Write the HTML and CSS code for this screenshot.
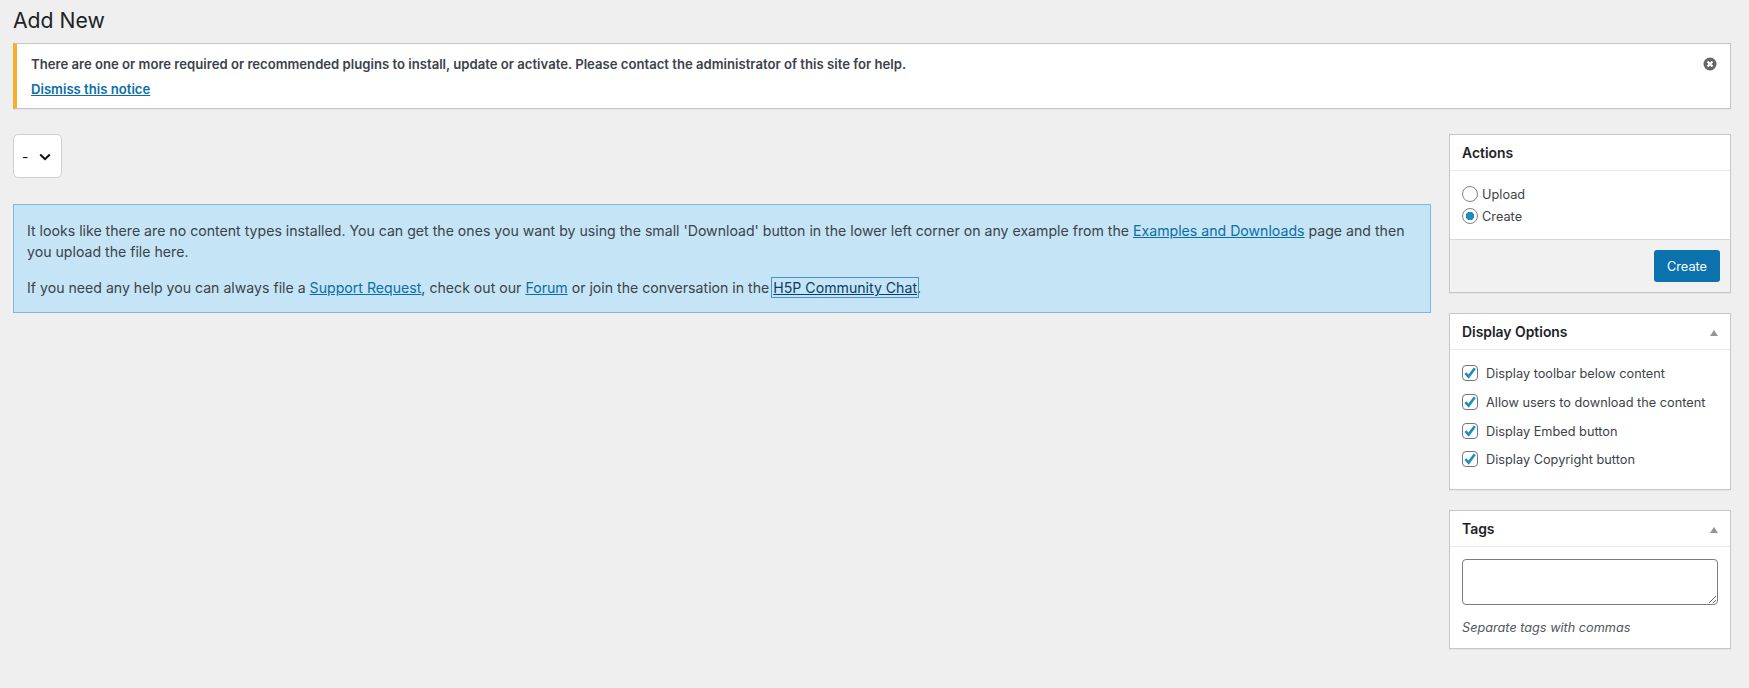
FILE: index.html
```html
<!DOCTYPE html>
<html lang="en">
<head>
<meta charset="utf-8">
<title>Add New</title>
<link rel="stylesheet" href="styles.css">
</head>
<body>
<h1 class="page-title">Add New</h1>
<div class="notice">
  <div class="notice-body">
    <p class="notice-text">There are one or more required or recommended plugins to install, update or activate. Please contact the administrator of this site for help.</p>
    <p class="notice-link"><a href="#">Dismiss this notice</a></p>
  </div>
  <svg class="notice-close" viewBox="0 0 14 14" width="14" height="14"><circle cx="7" cy="7" r="6.5" fill="#63676b"/><path d="M4.5 4.5l5 5M9.5 4.5l-5 5" stroke="#fff" stroke-width="2.2" fill="none"/></svg>
</div>
<div class="columns">
  <main class="main">
    <div class="select-box"><span class="select-value">-</span><svg class="select-chevron" viewBox="0 0 12 8" width="12" height="8"><path d="M1.2 1.5L6 6.2l4.8-4.7" stroke="#111" stroke-width="2" fill="none"/></svg></div>
    <div class="info">
      <p>It looks like there are no content types installed. You can get the ones you want by using the small 'Download' button in the lower left corner on any example from the <a href="#">Examples and Downloads</a> page and then you upload the file here.</p>
      <p>If you need any help you can always file a <a href="#">Support Request</a>, check out our <a href="#">Forum</a> or join the conversation in the <a href="#" class="focused">H5P Community Chat</a>.</p>
    </div>
  </main>
  <aside class="sidebar">
    <section class="box">
      <h2 class="box-title">Actions</h2>
      <div class="actions-body">
        <label class="radio-row"><span class="radio"></span><span class="row-text">Upload</span></label>
        <label class="radio-row"><span class="radio radio-on"></span><span class="row-text">Create</span></label>
      </div>
      <div class="actions-foot"><button class="create-btn" type="button">Create</button></div>
    </section>
    <section class="box">
      <h2 class="box-title">Display Options<span class="caret"></span></h2>
      <div class="options-body">
        <label class="check-row"><svg class="check" viewBox="0 0 16 16" width="16" height="16"><rect x=".5" y=".5" width="15" height="15" rx="3.5" fill="#fff" stroke="#6f7780"/><path d="M3.4 8.2l3.2 3.4 6.2-8.4" stroke="#1e8cbe" stroke-width="2.6" fill="none"/></svg><span class="row-text">Display toolbar below content</span></label>
        <label class="check-row"><svg class="check" viewBox="0 0 16 16" width="16" height="16"><rect x=".5" y=".5" width="15" height="15" rx="3.5" fill="#fff" stroke="#6f7780"/><path d="M3.4 8.2l3.2 3.4 6.2-8.4" stroke="#1e8cbe" stroke-width="2.6" fill="none"/></svg><span class="row-text">Allow users to download the content</span></label>
        <label class="check-row"><svg class="check" viewBox="0 0 16 16" width="16" height="16"><rect x=".5" y=".5" width="15" height="15" rx="3.5" fill="#fff" stroke="#6f7780"/><path d="M3.4 8.2l3.2 3.4 6.2-8.4" stroke="#1e8cbe" stroke-width="2.6" fill="none"/></svg><span class="row-text">Display Embed button</span></label>
        <label class="check-row"><svg class="check" viewBox="0 0 16 16" width="16" height="16"><rect x=".5" y=".5" width="15" height="15" rx="3.5" fill="#fff" stroke="#6f7780"/><path d="M3.4 8.2l3.2 3.4 6.2-8.4" stroke="#1e8cbe" stroke-width="2.6" fill="none"/></svg><span class="row-text">Display Copyright button</span></label>
      </div>
    </section>
    <section class="box">
      <h2 class="box-title">Tags<span class="caret"></span></h2>
      <div class="tags-body">
        <textarea class="tags-input"></textarea>
        <p class="tags-help">Separate tags with commas</p>
      </div>
    </section>
  </aside>
</div>
</body>
</html>
```
FILE: styles.css
```css
* { box-sizing: border-box; }
html, body { margin: 0; }
body {
  height: 688px;
  overflow: hidden;
  padding: 0 18px 0 13px;
  background: #efefef;
  color: #3c434a;
  font-family: Inter, "Liberation Sans", sans-serif;
  font-size: 12.75px;
  line-height: 1.4;
}
a { color: #0a6ea8; text-decoration: underline; }
.page-title {
  height: 43px;
  margin: 0;
  padding-top: 6px;
  font-size: 21.2px;
  line-height: 29px;
  font-weight: 400;
  color: #1d2327;
}
.notice {
  display: flex;
  justify-content: space-between;
  height: 66px;
  padding: 10px 13px 0 14px;
  background: #fff;
  border: 1px solid #c3c4c7;
  border-left: 4px solid #f9ae2b;
  box-shadow: 0 1px 1px rgba(0,0,0,.04);
}
.notice p { margin: 0; }
.notice-text { font-weight: 600; font-size: 13.13px; line-height: 20px; }
.notice-link { margin-top: 5px !important; font-weight: 600; font-size: 13.13px; line-height: 20px; }
.notice-close { flex: none; margin-top: 3px; }
.columns { display: flex; gap: 18px; margin-top: 25px; align-items: flex-start; }
.main { flex: 1; min-width: 0; }
.select-box {
  display: flex;
  align-items: center;
  justify-content: space-between;
  width: 49px;
  height: 44px;
  padding: 2px 10px 0 8px;
  background: #fff;
  border: 1px solid #cfcfcf;
  border-radius: 5px;
  color: #111;
  font-size: 14px;
}
.info {
  margin-top: 26px;
  padding: 15px 13px 10px 13px;
  height: 109px;
  background: #c5e5f6;
  border: 1px solid #7ab9e3;
  font-size: 14.13px;
  line-height: 21px;
}
.info p { margin: 0 0 15px; }
.focused { outline: 1.5px solid #4a8fd0; outline-offset: 1px; color: #08406a; }
.sidebar { flex: none; width: 282px; display: flex; flex-direction: column; gap: 20px; }
.box {
  background: #fff;
  border: 1px solid #c3c8cc;
  box-shadow: 0 1px 1px rgba(0,0,0,.04);
}
.box-title {
  display: flex;
  align-items: center;
  justify-content: space-between;
  height: 36px;
  margin: 0;
  padding: 2px 12px 0;
  font-size: 13.9px;
  font-weight: 600;
  color: #1d2327;
  border-bottom: 1px solid #eaeaea;
}
.caret {
  width: 0;
  height: 0;
  margin-right: .5px;
  border-left: 4.5px solid transparent;
  border-right: 4.5px solid transparent;
  border-bottom: 6px solid #8f959b;
}
.row-text { padding-top: 2px; }
.actions-body { height: 68px; padding: 12px 12px 0; }
.radio-row { display: flex; align-items: center; gap: 4px; height: 22px; }
.radio {
  width: 16px;
  height: 16px;
  background: #fff;
  border: 1px solid #7b8289;
  border-radius: 50%;
}
.radio-on { background: radial-gradient(circle, #1e8cbe 0 4px, #fff 4.5px); }
.actions-foot {
  display: flex;
  justify-content: flex-end;
  height: 53px;
  padding: 10px 10px 0;
  background: #f1f1f1;
  border-top: 1px solid #d6d8da;
}
.create-btn {
  width: 66px;
  height: 32px;
  padding: 0;
  border: 0;
  border-radius: 3px;
  background: #0b72ae;
  color: #fff;
  font: 12.75px Inter, "Liberation Sans", sans-serif;
}
.options-body { height: 139px; padding: 9px 12px 0; }
.check-row { display: flex; align-items: center; gap: 8px; height: 28.67px; }
.check { flex: none; }
.tags-body { padding: 12px 12px 0; height: 101px; }
.tags-input {
  display: block;
  width: 256px;
  height: 46px;
  margin: 0;
  background: #fff;
  border: 1px solid #747c84;
  border-radius: 4px;
  resize: both;
}
.tags-help { margin: 14px 0 0; font-size: 12.7px; font-style: italic; color: #50575e; }
```
